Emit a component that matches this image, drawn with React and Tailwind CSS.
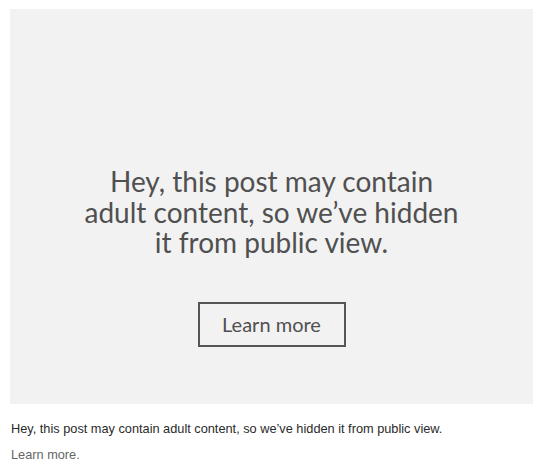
import React from 'react';

// Placeholder shown in place of a post flagged as sensitive
const HiddenPost = () => (
    <div className="pl-[10px] pr-[7px] pt-[9px]">
        <div className="h-[395px] bg-[#f2f2f2] flex flex-col items-center pt-[157px]">
            <p className="text-center text-[28px] leading-[30.5px] text-[#505050] whitespace-nowrap" style={{ fontFamily: 'Lato, sans-serif' }}>
                Hey, this post may contain<br />
                adult content, so we’ve hidden<br />
                it from public view.
            </p>
            <button className="mt-[44px] w-[148px] h-[45px] border-2 border-[#555] text-[20px] text-[#505050]" style={{ fontFamily: 'Lato, sans-serif' }}>
                Learn more
            </button>
        </div>
    </div>
);

export default function App() {
    return (
        <div className="w-[540px] h-[469px] bg-white">
            <HiddenPost />
            <div className="px-[11px] pt-[17px] text-[12.75px] leading-[16px]" style={{ fontFamily: '"Liberation Sans", Arial, sans-serif' }}>
                <p className="text-[#2a2a2a]">Hey, this post may contain adult content, so we’ve hidden it from public view.</p>
                <p className="mt-[10px] text-[#666]">Learn more.</p>
            </div>
        </div>
    );
}
